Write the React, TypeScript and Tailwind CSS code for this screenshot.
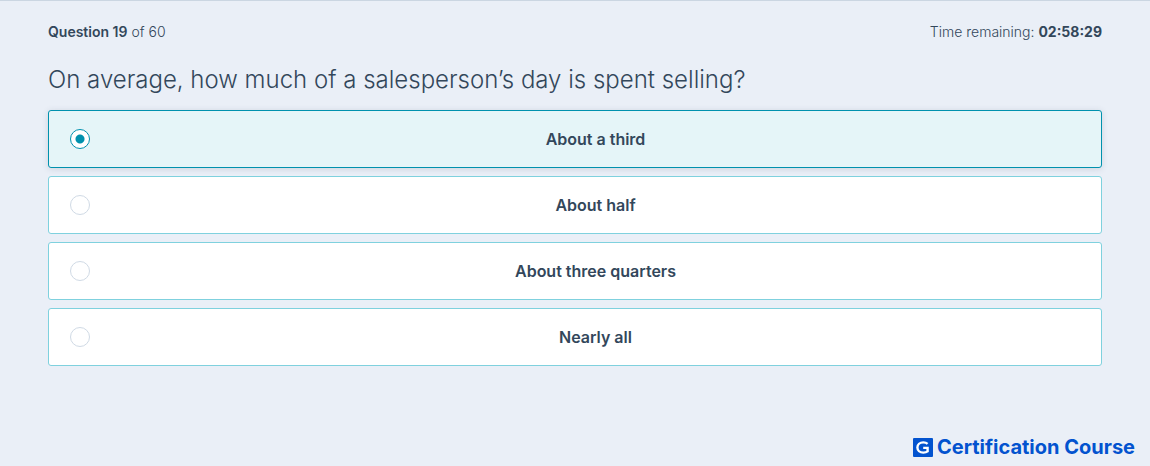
import { useState } from "react";

const ANSWERS = ["About a third", "About half", "About three quarters", "Nearly all"];

function BrandMark() {
  return (
    <svg viewBox="0 0 20 19" className="h-[19px] w-5" aria-hidden="true">
      <rect width="20" height="19" rx="1" fill="#0353cf" />
      <path
        d="M14.6 5.9C13.5 4.9 12 4.4 10.3 4.4C6.8 4.4 4.4 6.6 4.4 9.5S6.8 14.6 10.3 14.6C12 14.6 13.6 14.2 14.6 13.4V9.9H10.2"
        fill="none"
        stroke="#fff"
        strokeWidth="2.4"
      />
    </svg>
  );
}

export default function App() {
  const [selected, setSelected] = useState(ANSWERS[0]);

  return (
    <div className="flex min-h-screen flex-col border-t border-[#cbd6e2] bg-[#eaeff7] font-[Inter,sans-serif] text-[#33475b]">
      <main className="px-12 pt-5">
        <div className="flex items-center justify-between text-sm leading-[22px] font-light">
          <p>
            <span className="font-semibold">Question 19</span> of 60
          </p>
          <p>
            Time remaining: <span className="font-bold">02:58:29</span>
          </p>
        </div>

        <fieldset className="mt-[19px]">
          <legend className="text-2xl leading-9 font-light">
            On average, how much of a salesperson’s day is spent selling?
          </legend>
          <div className="mt-3 flex flex-col gap-2">
            {ANSWERS.map((answer) => (
              <label
                key={answer}
                className={`flex h-[58px] cursor-pointer items-center rounded-[3px] border pl-[21px] ${
                  selected === answer
                    ? "border-[#0091ae] bg-[#e5f5f8] shadow-[0_1px_6px_rgba(51,71,91,0.16)]"
                    : "border-[#7fd1de] bg-white"
                }`}
              >
                <input
                  type="radio"
                  name="answer"
                  value={answer}
                  checked={selected === answer}
                  onChange={() => setSelected(answer)}
                  className="size-5 shrink-0 cursor-pointer appearance-none rounded-full border border-[#d0dae5] bg-white checked:border-[#0091ae] checked:bg-[radial-gradient(circle,#0091ae_4px,#fff_5px)]"
                />
                <span className="flex-1 text-center text-base font-semibold">{answer}</span>
              </label>
            ))}
          </div>
        </fieldset>
      </main>

      <footer className="mt-auto flex items-center justify-end gap-1 px-[15px] pb-[3px] text-xl leading-8 font-bold text-[#0353cf]">
        <BrandMark />
        Certification Course
      </footer>
    </div>
  );
}
